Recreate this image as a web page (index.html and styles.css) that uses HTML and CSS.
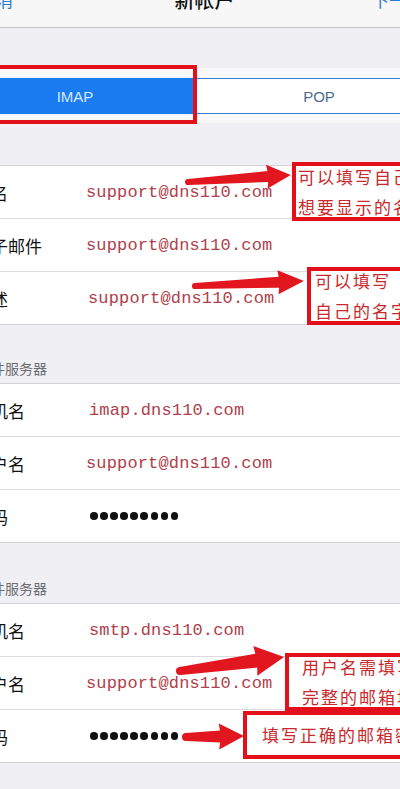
FILE: index.html
```html
<!DOCTYPE html>
<html lang="zh-CN">
<head>
<meta charset="utf-8">
<title>新帐户</title>
<link rel="stylesheet" href="styles.css">
</head>
<body>
<div class="page">
  <header class="nav">
    <div class="nav-in">
      <span class="nav-btn nav-left">取消</span>
      <span class="nav-title">新帐户</span>
      <span class="nav-btn nav-right">下一步</span>
    </div>
  </header>

  <div class="seg-band">
    <div class="seg">
      <div class="seg-item active">IMAP</div>
      <div class="seg-item">POP</div>
    </div>
  </div>

  <section class="group group-first">
    <div class="row"><span class="label">姓名</span><span class="value">support@dns110.com</span></div>
    <div class="row"><span class="label">电子邮件</span><span class="value">support@dns110.com</span></div>
    <div class="row"><span class="label">描述</span><span class="value value-r">support@dns110.com</span></div>
  </section>

  <div class="sec-head sec-in"><span>收件服务器</span></div>
  <section class="group">
    <div class="row"><span class="label">主机名</span><span class="value value-i">imap.dns110.com</span></div>
    <div class="row"><span class="label">用户名</span><span class="value">support@dns110.com</span></div>
    <div class="row"><span class="label">密码</span><span class="dots"><i></i><i></i><i></i><i></i><i></i><i></i><i></i><i></i><i></i></span></div>
  </section>

  <div class="sec-head sec-out"><span>发件服务器</span></div>
  <section class="group">
    <div class="row"><span class="label">主机名</span><span class="value value-i">smtp.dns110.com</span></div>
    <div class="row"><span class="label">用户名</span><span class="value">support@dns110.com</span></div>
    <div class="row"><span class="label">密码</span><span class="dots"><i></i><i></i><i></i><i></i><i></i><i></i><i></i><i></i><i></i></span></div>
  </section>

  <div class="mark mark-imap"></div>
  <div class="note note-1"><span>可以填写自己</span><span>想要显示的名称</span></div>
  <div class="note note-2"><span>可以填写</span><span>自己的名字</span></div>
  <div class="note note-3"><span>用户名需填写</span><span>完整的邮箱地址</span></div>
  <div class="note note-4"><span>填写正确的邮箱密码</span></div>

  <svg class="arrows" width="400" height="789" viewBox="0 0 400 789">
    <g fill="#e2161e">
      <g transform="translate(188 182) rotate(-3.9)">
        <path d="M0,-3 L80,-5.5 L79,-12 L103,0 L79,12 L80,5.5 L0,3 Z"/>
        <circle cx="0" cy="0" r="3"/>
      </g>
      <g transform="translate(195 286) rotate(-2.6)">
        <path d="M0,-3 L84,-5.5 L83,-12 L109,0 L83,12 L84,5.5 L0,3 Z"/>
        <circle cx="0" cy="0" r="3"/>
      </g>
      <g transform="translate(180 671) rotate(-7.7)">
        <path d="M0,-4 L77,-7 L76,-15 L105,0 L76,15 L77,7 L0,4 Z"/>
        <circle cx="0" cy="0" r="4"/>
      </g>
      <g transform="translate(186 737) rotate(-1)">
        <path d="M0,-4 L34,-6 L33,-13 L58,0 L33,13 L34,6 L0,4 Z"/>
        <circle cx="0" cy="0" r="4"/>
      </g>
    </g>
  </svg>
</div>
</body>
</html>
```

FILE: styles.css
```css
html, body {
  margin: 0;
  padding: 0;
  background: #efeff4;
}

.page {
  position: relative;
  width: 400px;
  height: 789px;
  overflow: hidden;
  background: #efeff4;
  font-family: "Noto Sans CJK SC", "Noto Sans", sans-serif;
  color: #111;
}

/* navigation bar */
.nav {
  height: 27px;
  background: #f7f7f8;
  border-bottom: 1px solid #c4c4c8;
  overflow: hidden;
}

.nav-in {
  position: relative;
  display: flex;
  align-items: center;
  height: 20px;
  margin-top: -10px;
  line-height: 20px;
}

.nav-btn {
  font-size: 17px;
  color: #2f7ad6;
}

.nav-left {
  margin-left: -21px;
}

.nav-title {
  flex: 1;
  text-align: center;
  font-size: 20px;
  font-weight: 500;
  color: #111;
  padding-left: 24px;
}

.nav-right {
  width: 28px;
  white-space: nowrap;
  overflow: visible;
}

/* segmented control */
.seg-band {
  margin-top: 40px;
  background: #f8f8f9;
  padding: 10px 0 9px;
}

.seg {
  display: flex;
  height: 36px;
  margin-left: -47px;
  width: 488px;
}

.seg-item {
  flex: 1;
  display: flex;
  align-items: center;
  justify-content: center;
  font-family: "Liberation Sans", Arial, sans-serif;
  font-size: 15px;
  color: #4a6b8e;
  background: #fff;
  border-top: 1px solid #3a7bd0;
  border-bottom: 1px solid #3a7bd0;
  box-sizing: border-box;
}

.seg-item.active {
  background: #1a7cf0;
  color: #d6e8ff;
  border-color: #1a7cf0;
}

/* grouped table */
.group {
  background: #fff;
  border-top: 1px solid #d3d3d8;
  border-bottom: 1px solid #cfcfd4;
}

.group-first {
  margin-top: 42px;
}

.row {
  display: flex;
  align-items: center;
  height: 52px;
  border-bottom: 1px solid #dcdce0;
}

.row:last-child {
  border-bottom: none;
}

.label {
  flex: none;
  width: 112px;
  margin-left: -26px;
  font-size: 17px;
  color: #111;
  white-space: nowrap;
}

.value {
  font-family: "Liberation Mono", "Courier New", monospace;
  font-size: 17px;
  letter-spacing: 0.15px;
  color: #b0404a;
  white-space: nowrap;
}

.value-r {
  padding-left: 2px;
}

.value-i {
  padding-left: 3px;
}

.dots {
  display: flex;
  gap: 2.6px;
  padding-left: 4px;
}

.dots i {
  display: block;
  width: 7.5px;
  height: 7.5px;
  border-radius: 50%;
  background: #111;
}

/* section headers */
.sec-head {
  display: flex;
  align-items: flex-end;
  padding-bottom: 6px;
  box-sizing: border-box;
  font-size: 14px;
  line-height: 18px;
  color: #6d6d72;
}

.sec-head span {
  margin-left: -23px;
  white-space: nowrap;
}

.sec-in {
  height: 58px;
}

.sec-out {
  height: 60px;
}

/* annotations drawn over the screenshot */
.mark {
  position: absolute;
  border: 4px solid #e3101c;
  box-sizing: border-box;
}

.mark-imap {
  left: -10px;
  top: 65px;
  width: 207px;
  height: 59px;
}

.note {
  position: absolute;
  display: flex;
  flex-direction: column;
  justify-content: center;
  box-sizing: border-box;
  border: 4px solid #e3101c;
  background: #fff;
  font-size: 17px;
  line-height: 30px;
  letter-spacing: 2px;
  color: #c9282c;
  white-space: nowrap;
  overflow: hidden;
}

.note-1 {
  left: 292px;
  top: 162px;
  width: 130px;
  height: 59px;
  padding-left: 2px;
}

.note-2 {
  left: 307px;
  top: 267px;
  width: 120px;
  height: 58px;
  padding-left: 4px;
}

.note-3 {
  left: 285px;
  top: 653px;
  width: 140px;
  height: 58px;
  padding-left: 13px;
}

.note-4 {
  left: 243px;
  top: 711px;
  width: 180px;
  height: 48px;
  padding-left: 15px;
}

.arrows {
  position: absolute;
  left: 0;
  top: 0;
  pointer-events: none;
}
```
